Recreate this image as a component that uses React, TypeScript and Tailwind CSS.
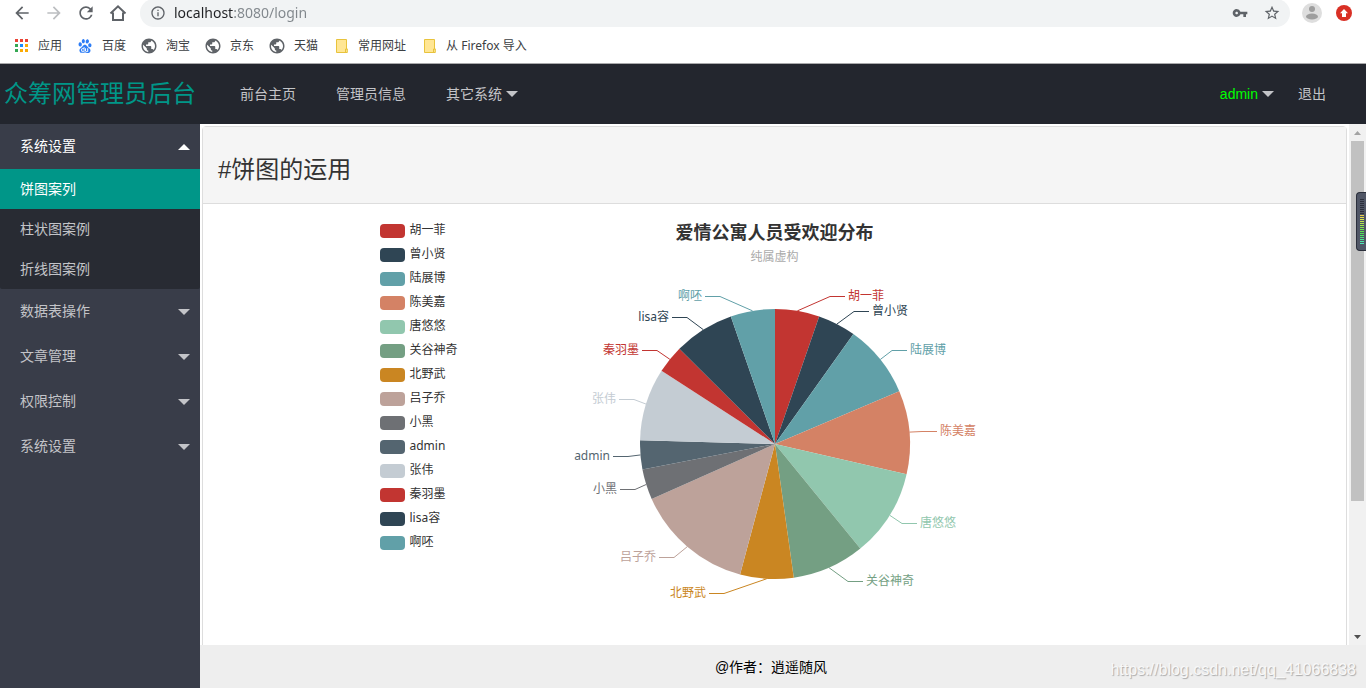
import React, { useState } from "react";
import {
  MdArrowBack, MdArrowForward, MdRefresh, MdInfoOutline, MdVpnKey, MdStarBorder, MdPublic
} from "react-icons/md";
import { SiBaidu } from "react-icons/si";

interface Slice {
  name: string;
  value: number;
  color: string;
  elbow: [number, number];
  side: "left" | "right";
}

const SLICES: Slice[] = [
  { name: "胡一菲", value: 191, color: "#c23531", elbow: [830, 296], side: "right" },
  { name: "曾小贤", value: 164, color: "#2f4554", elbow: [854, 311], side: "right" },
  { name: "陆展博", value: 315, color: "#61a0a8", elbow: [892, 350], side: "right" },
  { name: "陈美嘉", value: 359, color: "#d48265", elbow: [922, 431], side: "right" },
  { name: "唐悠悠", value: 379, color: "#91c7ae", elbow: [902, 523], side: "right" },
  { name: "关谷神奇", value: 312, color: "#749f83", elbow: [848, 581], side: "right" },
  { name: "北野武", value: 230, color: "#ca8622", elbow: [724, 593], side: "left" },
  { name: "吕子乔", value: 510, color: "#bda29a", elbow: [674, 557], side: "left" },
  { name: "小黑", value: 131, color: "#6e7074", elbow: [635, 489], side: "left" },
  { name: "admin", value: 125, color: "#546570", elbow: [628, 456], side: "left" },
  { name: "张伟", value: 312, color: "#c4ccd3", elbow: [634, 399], side: "left" },
  { name: "秦羽墨", value: 121, color: "#c23531", elbow: [657, 350], side: "left" },
  { name: "lisa容", value: 260, color: "#2f4554", elbow: [687, 317], side: "left" },
  { name: "啊呸", value: 191, color: "#61a0a8", elbow: [720, 296], side: "left" },
];

const CX = 775;
const CY = 444;
const R = 135;

const pointAt = (angle: number): [number, number] => [
  CX + R * Math.sin(angle),
  CY - R * Math.cos(angle),
];

const HomeIcon = () => (
  <svg viewBox="0 0 18 18" className="w-[18px] h-[18px]" fill="none" stroke="currentColor" strokeWidth="2">
    <path d="M1.5 9.5 9 2.3l7.5 7.2M4 8.5V16h10V8.5" />
  </svg>
);

const AppsIcon = () => {
  const colors = ["#ea4335", "#ea4335", "#ea4335", "#34a853", "#1a8cff", "#fbab05", "#34a853", "#fbab05", "#fbab05"];
  return (
    <svg viewBox="0 0 14 14" className="w-3.5 h-3.5">
      {colors.map((c, i) => (
        <rect key={i} x={1 + (i % 3) * 5} y={Math.floor(i / 3) * 5} width="3" height="3" fill={c} />
      ))}
    </svg>
  );
};

const FolderIcon = () => (
  <svg viewBox="0 0 14 14" className="w-3.5 h-3.5">
    <path d="M2.5.5h10v9.5h.8v3.5H2.5z" fill="#ffe694" stroke="#e8c33c" />
    <path d="M11.5 13.5V10h1.8" fill="none" stroke="#e8c33c" />
  </svg>
);

// Solid globe with light land patches
const GlobeIcon = () => (
  <span className="relative w-3.5 h-3.5 flex items-center justify-center">
    <MdPublic className="w-[18px] h-[18px] shrink-0 text-[#5f6368]" />
  </span>
);

const Caret = ({ up = false, bright = false }: { up?: boolean; bright?: boolean }) => (
  <svg viewBox="0 0 12 6" className={`w-3 h-1.5 shrink-0 ${bright ? "text-white" : "text-[#c3c4c8]"}`}>
    <path d={up ? "M0 6 6 0l6 6z" : "M0 0h12L6 6z"} fill="currentColor" />
  </svg>
);

const BOOKMARKS = [
  { label: "应用", icon: <AppsIcon /> },
  { label: "百度", icon: <SiBaidu className="w-3.5 h-3.5 text-[#2d7df6]" /> },
  { label: "淘宝", icon: <GlobeIcon /> },
  { label: "京东", icon: <GlobeIcon /> },
  { label: "天猫", icon: <GlobeIcon /> },
  { label: "常用网址", icon: <FolderIcon /> },
  { label: "从 Firefox 导入", icon: <FolderIcon /> },
];

function BrowserBar() {
  const [url, setUrl] = useState("localhost:8080/login");

  return (
    <div className="h-16 shrink-0 bg-white border-b border-[#a9a9ab] font-['Noto_Sans','Noto_Sans_CJK_SC',sans-serif]">
      <div className="h-7 -mt-px flex items-center pl-3 pr-3.5 text-[#5f6368]">
        <div className="flex items-center gap-3 pr-3">
          <button type="button" aria-label="back"><MdArrowBack className="w-5 h-5" /></button>
          <button type="button" aria-label="forward" className="text-[#bcbec1]"><MdArrowForward className="w-5 h-5" /></button>
          <button type="button" aria-label="reload"><MdRefresh className="w-5 h-5" /></button>
          <button type="button" aria-label="home" className="w-5 flex justify-center"><HomeIcon /></button>
        </div>
        <div className="flex-1 h-full flex items-center bg-[#f1f3f4] rounded-full px-2.5">
          <MdInfoOutline className="w-4 h-4 shrink-0" />
          <input
            type="text"
            aria-label="address"
            value={url}
            onChange={(e) => setUrl(e.target.value)}
            className="flex-1 min-w-0 ml-2 h-6 text-sm leading-6 outline-none text-transparent bg-clip-text bg-[linear-gradient(90deg,#202124_59px,#80868b_59px)]"
          />
          <div className="flex items-center gap-4">
            <button type="button" aria-label="password"><MdVpnKey className="w-4 h-4" /></button>
            <button type="button" aria-label="bookmark"><MdStarBorder className="w-4 h-4 scale-110" /></button>
          </div>
        </div>
        <div className="flex items-center gap-3.5 pl-3">
          <button type="button" aria-label="profile">
            <svg viewBox="0 0 20 20" className="w-5 h-5">
              <circle cx="10" cy="10" r="10" fill="#dedede" />
              <circle cx="10" cy="6" r="3" fill="#9e9e9e" />
              <ellipse cx="10" cy="13.5" rx="6" ry="3" fill="#9e9e9e" />
            </svg>
          </button>
          <button type="button" aria-label="update">
            <svg viewBox="0 0 16 16" className="w-4 h-4">
              <circle cx="8" cy="8" r="8" fill="#d93025" />
              <path d="M8 4 4 8.3h2V12h4V8.3h2z" fill="#fff" />
            </svg>
          </button>
        </div>
      </div>
      <div className="h-9 flex items-center gap-4 pt-0.5 pl-3.5 text-xs text-[#3c4043]">
        {BOOKMARKS.map((b) => (
          <a key={b.label} href="#" className="flex items-center gap-2.5 whitespace-nowrap">
            {b.icon}
            {b.label}
          </a>
        ))}
      </div>
    </div>
  );
}

function TopNav() {
  return (
    <header className="h-[60px] shrink-0 bg-[#23262e] flex items-center text-sm text-[#c3c4c8]">
      <div className="w-[200px] text-center text-2xl text-[#009688] whitespace-nowrap">众筹网管理员后台</div>
      <nav className="flex-1 flex items-center justify-between px-10">
        <div className="flex items-center gap-10">
          <a href="#">前台主页</a>
          <a href="#">管理员信息</a>
          <a href="#" className="flex items-center gap-1">其它系统 <Caret /></a>
        </div>
        <div className="flex items-center gap-6">
          <a href="#" className="flex items-center gap-1 text-[#00ff00]">admin <Caret /></a>
          <a href="#">退出</a>
        </div>
      </nav>
    </header>
  );
}

const SUB_ITEMS = ["饼图案列", "柱状图案例", "折线图案例"];
const GROUPS = ["数据表操作", "文章管理", "权限控制", "系统设置"];

function Sidebar() {
  const [active, setActive] = useState(SUB_ITEMS[0]);

  return (
    <aside className="w-[200px] shrink-0 bg-[#393d49] text-sm text-[#c3c4c8]">
      <button type="button" className="w-full h-[45px] pl-5 pr-2.5 flex items-center justify-between text-white">
        <span className="pb-0.5">系统设置</span>
        <Caret up bright />
      </button>
      <div className="bg-[#282b33] rounded-b-xs">
        {SUB_ITEMS.map((item) => (
          <button
            key={item}
            type="button"
            onClick={() => setActive(item)}
            className={`w-full h-10 px-5 flex items-center ${item === active ? "bg-[#009688] text-white" : ""}`}
          >
            {item}
          </button>
        ))}
      </div>
      {GROUPS.map((group) => (
        <button key={group} type="button" className="w-full h-[45px] pl-5 pr-2.5 flex items-center justify-between">
          <span className="pb-0.5">{group}</span>
          <Caret />
        </button>
      ))}
    </aside>
  );
}

function PieChart() {
  const total = SLICES.reduce((sum, s) => sum + s.value, 0);
  let acc = 0;

  return (
    <svg viewBox="475 269 600 340" className="w-full" role="img" aria-label="爱情公寓人员受欢迎分布">
      {SLICES.map((s) => {
        const start = (acc / total) * Math.PI * 2;
        acc += s.value;
        const end = (acc / total) * Math.PI * 2;
        const [x1, y1] = pointAt(start);
        const [x2, y2] = pointAt(end);
        const [mx, my] = pointAt((start + end) / 2);
        const dir = s.side === "right" ? 1 : -1;
        const [ex, ey] = s.elbow;
        return (
          <g key={s.name}>
            <path d={`M${CX} ${CY}L${x1} ${y1}A${R} ${R} 0 0 1 ${x2} ${y2}z`} fill={s.color} />
            <polyline
              points={`${mx},${my} ${ex},${ey + 0.5} ${ex + 15 * dir},${ey + 0.5}`}
              fill="none"
              stroke={s.color}
            />
            <text
              x={ex + 18 * dir}
              y={ey + 4}
              textAnchor={dir === 1 ? "start" : "end"}
              fill={s.color}
              className="text-xs"
            >
              {s.name}
            </text>
          </g>
        );
      })}
    </svg>
  );
}

function ChartPanel() {
  return (
    <section className="flex-1 min-w-0 m-0.5 min-h-[640px] self-start border border-[#dddddd] rounded-sm bg-white">
      <div className="h-[77px] px-[15px] pt-2.5 flex items-center bg-[#f5f5f5] border-b border-[#dddddd]">
        <h2 className="text-2xl text-[#333333]">#饼图的运用</h2>
      </div>
      <div className="max-w-[800px] mx-auto pt-[15px] grid grid-cols-[100px_1fr_100px] font-['Noto_Sans','Noto_Sans_CJK_SC',sans-serif]">
        <ul className="pl-[5px] text-xs text-[#333333]">
          {SLICES.map((s) => (
            <li key={s.name} className="h-6 flex items-center gap-[5px] whitespace-nowrap">
              <span className="w-[25px] h-3.5 shrink-0 rounded-sm" style={{ backgroundColor: s.color }} />
              <span className="pb-0.5">{s.name}</span>
            </li>
          ))}
        </ul>
        <div>
          <h3 className="text-lg leading-[26px] font-bold text-center text-[#333333]">爱情公寓人员受欢迎分布</h3>
          <p className="text-xs leading-6 text-center text-[#aaaaaa]">纯属虚构</p>
          <PieChart />
        </div>
      </div>
    </section>
  );
}

function ScrollTrack() {
  return (
    <div className="w-[17px] shrink-0 bg-[#f1f1f1] flex flex-col items-center">
      <div className="h-[17px] flex items-center">
        <svg viewBox="0 0 7 4" className="w-[7px] h-1"><path d="M0 4 3.5 0 7 4z" fill="#a3a3a3" /></svg>
      </div>
      <div className="flex-1 w-full px-0.5">
        <div className="h-[74%] bg-[#c1c1c1]" />
      </div>
      <div className="h-[17px] flex items-center">
        <svg viewBox="0 0 7 4" className="w-[7px] h-1"><path d="M0 0h7L3.5 4z" fill="#505050" /></svg>
      </div>
    </div>
  );
}

// Level meter docked on the window edge
function EdgeMeter() {
  const bars = Array.from({ length: 23 }, (_, i) => {
    if (i < 8) return "#2b2f3b";
    return `hsl(${50 + (i - 8) * 8} 75% 60%)`;
  });
  return (
    <div className="absolute right-0 top-[192px] w-2.5 h-[59px] bg-[#505666] border border-r-0 border-[#2b2f3b] rounded-l-sm flex justify-center">
      <svg viewBox="0 0 4 46" className="w-1 h-[46px] mt-1.5">
        {bars.map((c, i) => (
          <rect key={i} x="0" y={i * 2} width="4" height="1" fill={c} />
        ))}
      </svg>
    </div>
  );
}

export default function App() {
  return (
    <div className="relative h-screen flex flex-col overflow-hidden bg-white font-['Liberation_Sans','Noto_Sans_CJK_SC',sans-serif]">
      <BrowserBar />
      <TopNav />
      <div className="flex-1 min-h-0 flex">
        <Sidebar />
        <div className="flex-1 min-w-0 flex flex-col">
          <main className="flex-1 min-h-0 flex overflow-hidden">
            <ChartPanel />
            <ScrollTrack />
          </main>
          <footer className="h-[43px] shrink-0 bg-[#eeeeee] flex items-center justify-center pr-6 text-sm text-black">
            @作者：逍遥随风
          </footer>
        </div>
      </div>
      <EdgeMeter />
      <div className="absolute right-2.5 bottom-1.5 text-base text-[#f8f8f8] [text-shadow:1px_1px_1px_#aaaaaa]">
        https://blog.csdn.net/qq_41066838
      </div>
    </div>
  );
}
